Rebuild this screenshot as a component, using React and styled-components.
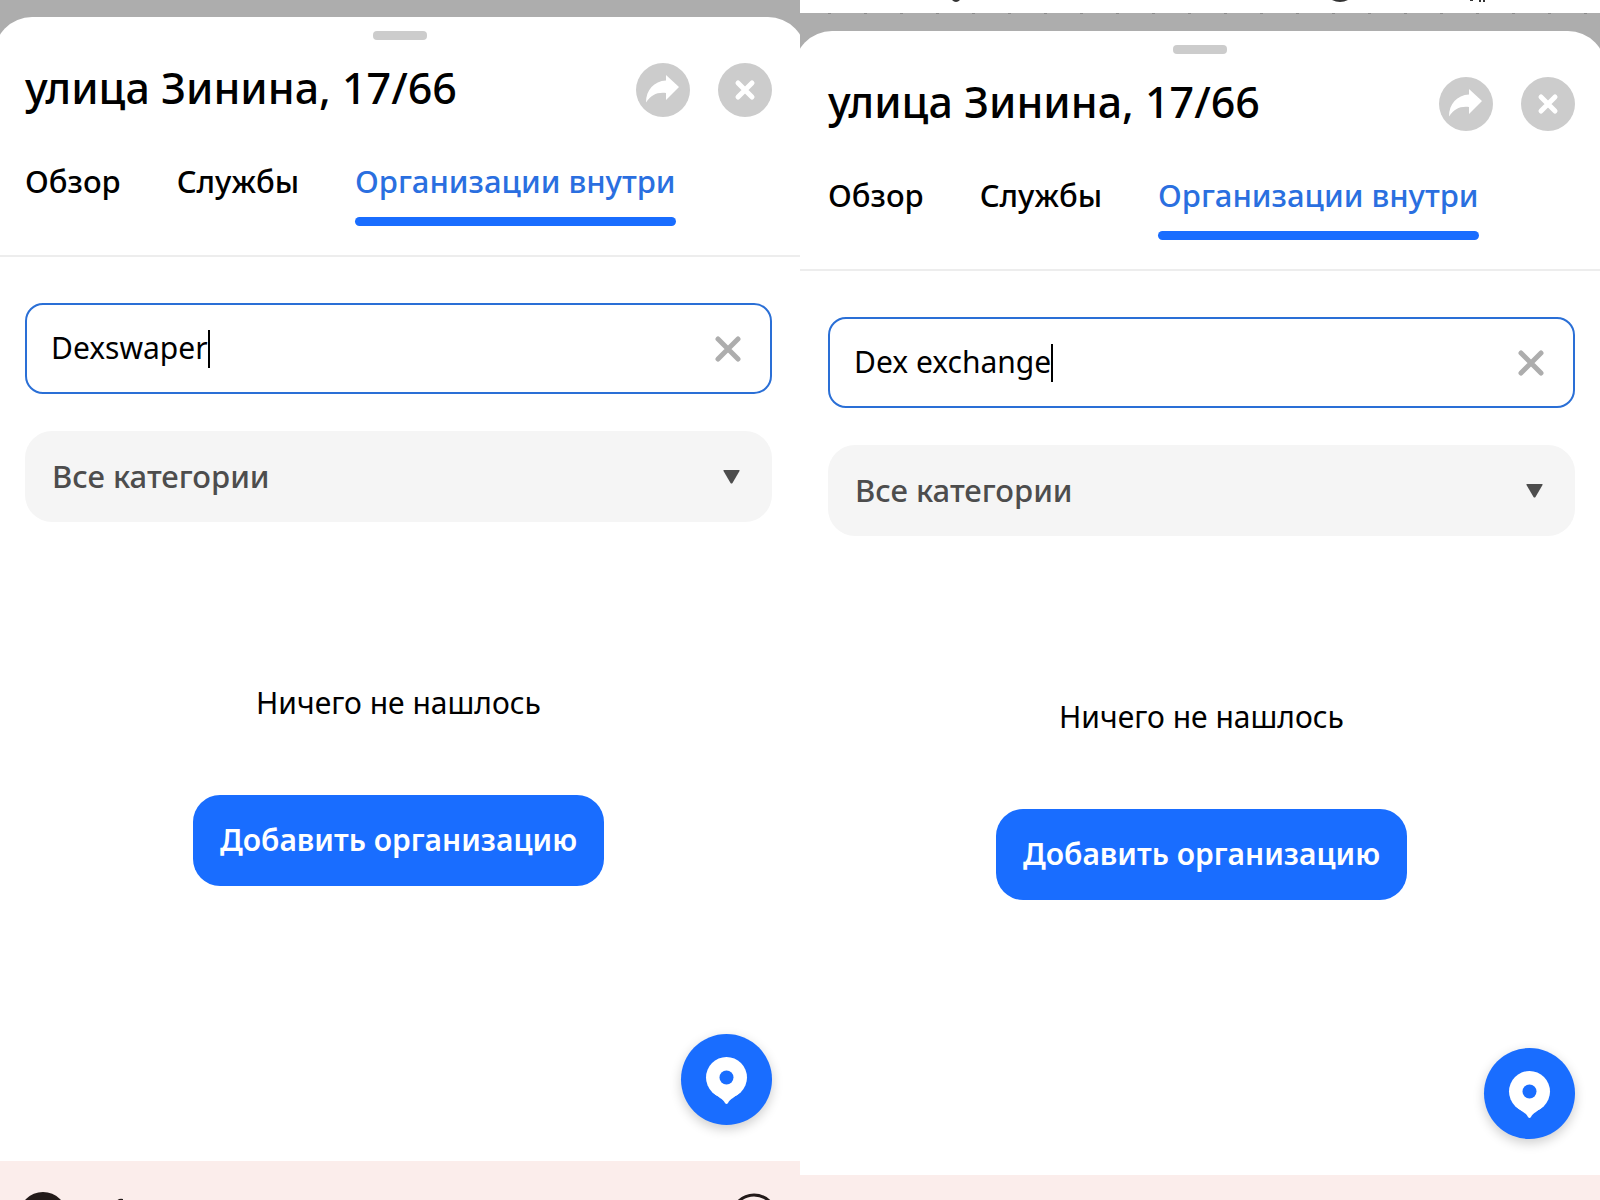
import React, { useState } from "react";
import styled, { createGlobalStyle } from "styled-components";

const GlobalStyle = createGlobalStyle`
  * {
    box-sizing: border-box;
  }

  body {
    margin: 0;
    background: #fff;
    color: #000;
    font-family: "Noto Sans", "Open Sans", sans-serif;
    font-size: 30px;
    line-height: 40px;
  }

  button, input, select {
    margin: 0;
    padding: 0;
    border: 0;
    background: none;
    color: inherit;
    font: inherit;
    cursor: pointer;
  }
`

const Page = styled.div`
  display: grid;
  grid-template-columns: 1fr 1fr;
  height: 100vh;
  overflow: hidden;
`

const Screen = styled.section`
  display: flex;
  flex-direction: column;
  min-width: 0;
  overflow: hidden;
  --start: ${({ $side }) => ($side === "left" ? 25 : 28)}px;
  --end: ${({ $side }) => ($side === "left" ? 28 : 25)}px;
`

const StatusStrip = styled.div`
  height: 14px;
  flex: none;
  overflow: hidden;
`

const StripArt = styled.svg`
  display: block;
  width: 100%;
  height: 100%;
`

const MapArea = styled.div`
  display: flex;
  flex-direction: column;
  flex: none;
  padding-top: 17px;
  background: #adadad;
`

/* a little wider than the screen, so the rounded corners run off its edge */
const Sheet = styled.main`
  display: flex;
  flex-direction: column;
  height: 1144px;
  margin: 0 -6px;
  padding: 0 6px;
  background: #fff;
  border-radius: 38px 38px 0 0;
`

const Handle = styled.div`
  align-self: center;
  flex: none;
  width: 54px;
  height: 9px;
  margin-top: 14px;
  border-radius: 4px;
  background: #ccc;
`

const Header = styled.header`
  display: flex;
  align-items: center;
  gap: 28px;
  margin-top: 18px;
  padding: 0 var(--end) 0 var(--start);
`

const Title = styled.h1`
  flex: 1;
  margin: 0;
  padding-bottom: 4px;
  font-size: 43px;
  font-weight: 500;
  line-height: 60px;
`

const RoundButton = styled.button`
  display: flex;
  width: 54px;
  height: 54px;
  border-radius: 50%;
  background: #ccc;
`

const Tabs = styled.nav`
  display: flex;
  gap: 56px;
  margin-top: 39px;
  padding: 0 var(--end) 29px var(--start);
  border-bottom: 2px solid #ededed;
`

const Tab = styled.button`
  position: relative;
  padding-bottom: 25px;
  font-size: 31px;
  font-weight: 500;
  white-space: nowrap;
  color: ${({ $active }) => ($active ? "#2a6fe0" : "#000")};

  &::after {
    content: "";
    position: absolute;
    left: 0;
    right: 0;
    bottom: 0;
    height: 9px;
    border-radius: 5px;
    background: ${({ $active }) => ($active ? "#196dff" : "transparent")};
  }
`

const Form = styled.div`
  display: flex;
  flex-direction: column;
  gap: 37px;
  padding: 46px var(--end) 0 var(--start);
`

const SearchBox = styled.div`
  display: flex;
  align-items: center;
  height: 91px;
  padding: 0 24px;
  border: 2px solid #2a6fd6;
  border-radius: 18px;
`

const Field = styled.div`
  display: grid;
  flex: 1;
  align-items: center;

  > * {
    grid-area: 1 / 1;
  }
`

const SearchInput = styled.input`
  width: 100%;
  height: 44px;
  padding-bottom: 2px;
  outline: none;
  caret-color: transparent;
  cursor: text;
`

const CaretLine = styled.div`
  display: flex;
  align-items: center;
  pointer-events: none;
`

const Ghost = styled.span`
  visibility: hidden;
  white-space: pre;
`

const Caret = styled.span`
  width: 2px;
  height: 38px;
  background: #000;
`

const ClearButton = styled.button`
  display: flex;
  padding: 5px;
`

const CategoryBox = styled.div`
  display: grid;
  align-items: center;
  height: 91px;
  border-radius: 27px;
  background: #f5f5f5;
  color: #4d4d4d;

  > * {
    grid-area: 1 / 1;
  }
`

const Category = styled.select`
  appearance: none;
  width: 100%;
  height: 100%;
  padding: 0 27px 2px;
  font-size: 31px;
  font-weight: 500;
`

const Triangle = styled.svg`
  justify-self: end;
  margin-right: 32px;
  pointer-events: none;
`

const Empty = styled.div`
  display: flex;
  flex-direction: column;
  align-items: center;
  margin-top: 161px;
  padding: 0 var(--end) 0 var(--start);
`

const Message = styled.p`
  margin: 0;
`

const AddButton = styled.button`
  height: 91px;
  margin-top: 72px;
  padding: 0 27px 2px;
  border-radius: 27px;
  background: #196dff;
  color: #fff;
  font-weight: 600;
  white-space: nowrap;
`

const LocateRow = styled.div`
  display: flex;
  justify-content: flex-end;
  margin-top: auto;
  padding: 0 var(--end) 36px;
`

const LocateButton = styled.button`
  display: flex;
  width: 91px;
  height: 91px;
  border-radius: 50%;
  background: #196dff;
  box-shadow: 0 4px 12px rgba(0, 0, 0, 0.2);
`

const Banner = styled.footer`
  flex: 1;
  min-height: 0;
  overflow: hidden;
  background: #fbedeb;
`

const BannerRow = styled.div`
  display: flex;
  justify-content: space-between;
  padding: 29px 20px 0;
`

function ShareIcon() {
  return (
    <svg width="54" height="54" viewBox="0 0 54 54" aria-hidden="true">
      <path
        d="M30 12 L43 24 L30 37 V30 C21 29 15 32 10 39.500 C10 27 18 18 30 17.500 Z"
        fill="#fff"
      />
    </svg>
  )
}

function CloseIcon() {
  return (
    <svg width="54" height="54" viewBox="0 0 54 54" aria-hidden="true">
      <path d="M20 20 L34 34 M34 20 L20 34" stroke="#fff" strokeWidth="5" strokeLinecap="round" />
    </svg>
  )
}

function PinIcon() {
  return (
    <svg width="91" height="91" viewBox="0 0 91 91" aria-hidden="true">
      <circle cx="45.500" cy="43.500" r="20.500" fill="#fff" />
      <path d="M31 58 C37 63 42 65 44 69 Q45.500 71 47 69 C49 65 54 63 60 58 Z" fill="#fff" />
      <circle cx="45.500" cy="43.500" r="7" fill="#196dff" />
    </svg>
  )
}

const tabs = ["Обзор", "Службы", "Организации внутри"]

function AddressCard({ side, query, top, bottom }) {
  const [value, setValue] = useState(query)
  const [active, setActive] = useState(tabs[2])

  return (
    <Screen $side={side}>
      {top}
      <MapArea>
        <Sheet>
          <Handle />
          <Header>
            <Title>улица Зинина, 17/66</Title>
            <RoundButton aria-label="Поделиться"><ShareIcon /></RoundButton>
            <RoundButton aria-label="Закрыть"><CloseIcon /></RoundButton>
          </Header>
          <Tabs>
            {tabs.map(tab => (
              <Tab key={tab} $active={tab === active} onClick={() => setActive(tab)}>{tab}</Tab>
            ))}
          </Tabs>
          <Form>
            <SearchBox>
              <Field>
                <SearchInput
                  aria-label="Поиск"
                  value={value}
                  onChange={e => setValue(e.target.value)}
                />
                <CaretLine aria-hidden="true">
                  <Ghost>{value}</Ghost>
                  <Caret />
                </CaretLine>
              </Field>
              <ClearButton aria-label="Очистить" onClick={() => setValue("")}>
                <svg width="26" height="26" viewBox="0 0 26 26" aria-hidden="true">
                  <path d="M3 3 L23 23 M23 3 L3 23" stroke="#adadad" strokeWidth="5" strokeLinecap="round" />
                </svg>
              </ClearButton>
            </SearchBox>
            <CategoryBox>
              <Category aria-label="Категория">
                <option>Все категории</option>
              </Category>
              <Triangle width="17" height="14" viewBox="0 0 17 14" aria-hidden="true">
                <path d="M1 0 H16 Q17 0 16.500 1 L9.500 13 Q8.500 14 7.500 13 L0.500 1 Q0 0 1 0 Z" fill="#4d4d4d" />
              </Triangle>
            </CategoryBox>
          </Form>
          <Empty>
            <Message>Ничего не нашлось</Message>
            <AddButton>Добавить организацию</AddButton>
          </Empty>
          <LocateRow>
            <LocateButton aria-label="Моё местоположение"><PinIcon /></LocateButton>
          </LocateRow>
        </Sheet>
      </MapArea>
      <Banner>{bottom}</Banner>
    </Screen>
  )
}

function App() {
  return (
    <>
      <GlobalStyle />
      <Page>
        <AddressCard
          side="left"
          query="Dexswaper"
          bottom={
            <BannerRow>
              <svg width="120" height="50" viewBox="0 0 120 50" aria-hidden="true">
                <circle cx="23" cy="26" r="24" fill="#231a19" />
                <path d="M96 12 Q98 8 103 9 V12 Z" fill="#231a19" />
              </svg>
              <svg width="52" height="52" viewBox="0 0 52 52" aria-hidden="true">
                <circle cx="26" cy="27" r="22" fill="none" stroke="#231a19" strokeWidth="3" />
              </svg>
            </BannerRow>
          }
        />
        <AddressCard
          side="right"
          query="Dex exchange"
          top={
            <StatusStrip>
              <StripArt viewBox="0 0 800 14" aria-hidden="true">
                <path d="M152 0 Q156 4 160 0 Z M532 0 Q540 4 548 0 Z M670 0 h3 v1 h-3 Z M679 0 h2 v2 h-2 Z M683 0 h2 v2 h-2 Z" fill="#333" />
                <path d="M0 13 H800 V14 H0 Z" fill="#adadad" />
                <path d="M28 13.500 H800" stroke="#8a8a8a" strokeDasharray="3 33" />
              </StripArt>
            </StatusStrip>
          }
        />
      </Page>
    </>
  );
}

export default App;
